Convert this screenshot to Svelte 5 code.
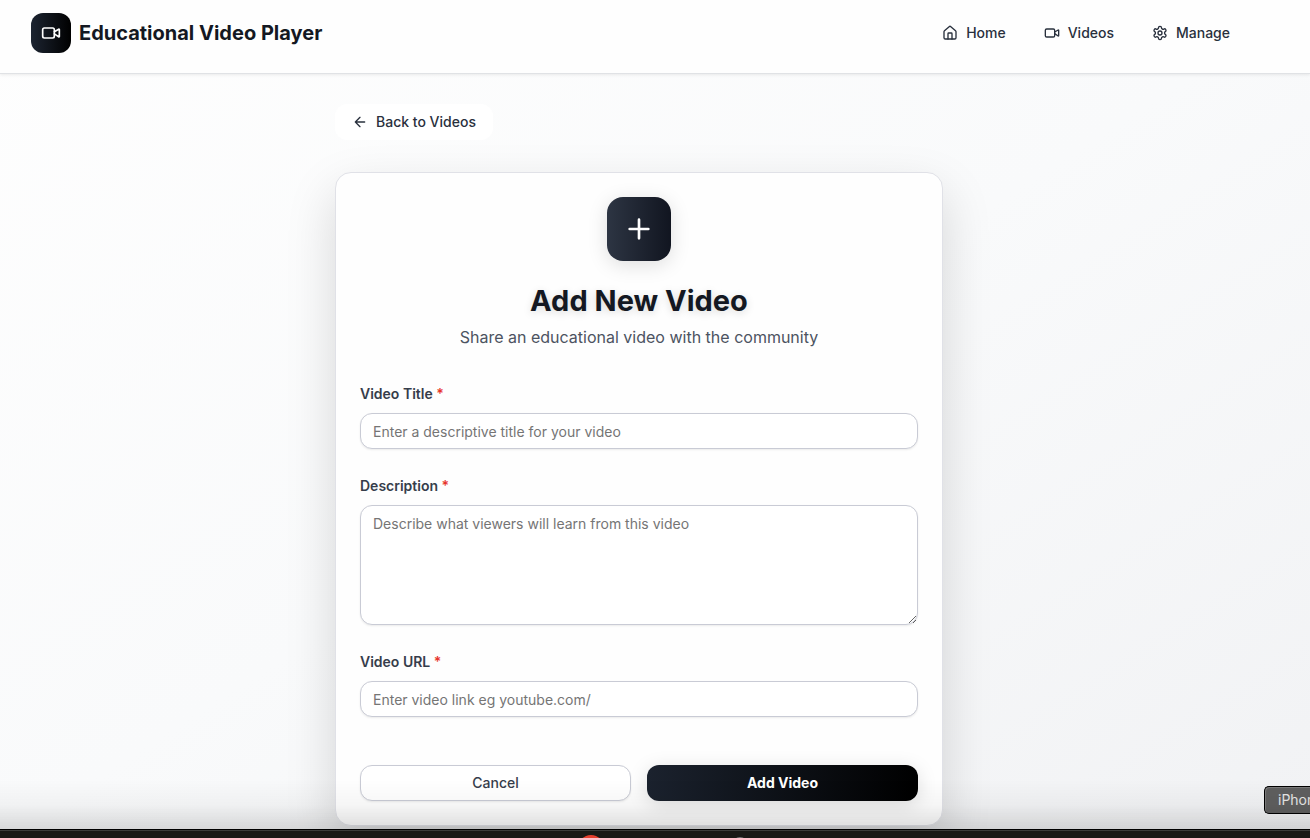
<script>
  let title = $state('');
  let description = $state('');
  let url = $state('');
</script>

{#snippet videoIcon(size)}
  <svg width={size} height={size} viewBox="0 0 24 24" aria-hidden="true">
    <path d="m16 13 5.223 3.482a.5.5 0 0 0 .777-.416V7.87a.5.5 0 0 0-.752-.432L16 10.5" />
    <rect x="2" y="6" width="14" height="12" rx="2" />
  </svg>
{/snippet}

<div class="page">
  <header>
    <div class="bar">
      <a class="brand" href="#home">
        <span class="logo">{@render videoIcon(20)}</span>
        <span>Educational Video Player</span>
      </a>
      <nav>
        <a href="#home">
          <svg width="16" height="16" viewBox="0 0 24 24" aria-hidden="true">
            <path d="M15 21v-8a1 1 0 0 0-1-1h-4a1 1 0 0 0-1 1v8" />
            <path d="M3 10a2 2 0 0 1 .709-1.528l7-5.999a2 2 0 0 1 2.582 0l7 5.999A2 2 0 0 1 21 10v9a2 2 0 0 1-2 2H5a2 2 0 0 1-2-2z" />
          </svg>
          Home
        </a>
        <a href="#videos">{@render videoIcon(16)} Videos</a>
        <a href="#manage">
          <svg width="16" height="16" viewBox="0 0 24 24" aria-hidden="true">
            <path d="M12.22 2h-.44a2 2 0 0 0-2 2v.18a2 2 0 0 1-1 1.73l-.43.25a2 2 0 0 1-2 0l-.15-.08a2 2 0 0 0-2.73.73l-.22.38a2 2 0 0 0 .73 2.73l.15.1a2 2 0 0 1 1 1.72v.51a2 2 0 0 1-1 1.74l-.15.09a2 2 0 0 0-.73 2.73l.22.38a2 2 0 0 0 2.73.73l.15-.08a2 2 0 0 1 2 0l.43.25a2 2 0 0 1 1 1.73V20a2 2 0 0 0 2 2h.44a2 2 0 0 0 2-2v-.18a2 2 0 0 1 1-1.73l.43-.25a2 2 0 0 1 2 0l.15.08a2 2 0 0 0 2.73-.73l.22-.39a2 2 0 0 0-.73-2.73l-.15-.08a2 2 0 0 1-1-1.74v-.5a2 2 0 0 1 1-1.74l.15-.09a2 2 0 0 0 .73-2.73l-.22-.38a2 2 0 0 0-2.73-.73l-.15.08a2 2 0 0 1-2 0l-.43-.25a2 2 0 0 1-1-1.73V4a2 2 0 0 0-2-2z" />
            <circle cx="12" cy="12" r="3" />
          </svg>
          Manage
        </a>
      </nav>
    </div>
  </header>

  <main>
    <a class="back" href="#videos">
      <svg width="16" height="16" viewBox="0 0 24 24" aria-hidden="true">
        <path d="m12 19-7-7 7-7M19 12H5" />
      </svg>
      Back to Videos
    </a>

    <section class="card">
      <div class="intro">
        <span class="badge">
          <svg width="32" height="32" viewBox="0 0 24 24" aria-hidden="true">
            <path d="M5 12h14M12 5v14" />
          </svg>
        </span>
        <h1>Add New Video</h1>
        <p>Share an educational video with the community</p>
      </div>

      <form onsubmit={(e) => e.preventDefault()}>
        <div class="field">
          <label for="title">Video Title <span>*</span></label>
          <input id="title" type="text" placeholder="Enter a descriptive title for your video" bind:value={title} />
        </div>
        <div class="field">
          <label for="description">Description <span>*</span></label>
          <textarea id="description" placeholder="Describe what viewers will learn from this video" bind:value={description}></textarea>
        </div>
        <div class="field">
          <label for="url">Video URL <span>*</span></label>
          <input id="url" type="text" placeholder="Enter video link eg youtube.com/" bind:value={url} />
        </div>
        <div class="actions">
          <button type="button" class="cancel">Cancel</button>
          <button type="submit" class="submit">Add Video</button>
        </div>
      </form>
    </section>
  </main>

  <div class="tooltip">iPhone</div>
  <div class="dock" aria-hidden="true">
    <i class="red"></i>
    <i class="gray"></i>
  </div>
</div>

<style>
  :global(body) {
    margin: 0;
  }
  .page,
  .page * {
    box-sizing: border-box;
  }
  .page {
    min-height: 100vh;
    font-family: Inter, sans-serif;
    font-size: 14px;
    line-height: 20px;
    color: #29303d;
    background: linear-gradient(to bottom right, #fefefe 0%, #f9fafb 50%, #f1f2f4 100%);
  }
  svg {
    flex: none;
    fill: none;
    stroke: currentColor;
    stroke-width: 2;
    stroke-linecap: round;
    stroke-linejoin: round;
  }
  a {
    color: inherit;
    text-decoration: none;
  }
  header {
    padding: 13px 32px 20px 0;
    background: #fefefe;
    border-bottom: 1px solid #e0e2e5;
    box-shadow: 0 1px 3px rgba(0, 0, 0, 0.08);
  }
  .bar {
    display: flex;
    align-items: center;
    justify-content: space-between;
    max-width: 1280px;
    margin: 0 auto;
    padding: 0 32px 0 31px;
  }
  .brand {
    display: flex;
    align-items: center;
    gap: 8px;
    font-size: 20px;
    line-height: 28px;
    font-weight: 700;
    color: #141822;
  }
  .logo {
    display: grid;
    place-items: center;
    width: 40px;
    height: 40px;
    border-radius: 12px;
    color: #fff;
    background: linear-gradient(90deg, #1c2431, #000);
  }
  nav {
    display: flex;
    gap: 6px;
  }
  nav a,
  .back {
    display: flex;
    align-items: center;
    gap: 8px;
    padding: 6px 16px;
    border-radius: 12px;
    font-weight: 500;
  }
  main {
    display: flex;
    flex-direction: column;
    align-items: center;
    padding: 30px 32px 12px 0;
  }
  .back,
  .card {
    width: 100%;
    max-width: 608px;
  }
  .back {
    width: fit-content;
    padding: 8px 17px;
    margin: 0 auto 32px max(0px, calc(50% - 304px));
    background: #fff;
  }
  .card {
    padding: 24px;
    border: 1px solid #e0e1e7;
    border-radius: 16px;
    background: #fefefe;
    box-shadow: 0 20px 50px rgba(0, 0, 0, 0.15);
  }
  .intro {
    display: flex;
    flex-direction: column;
    align-items: center;
    text-align: center;
  }
  .badge {
    display: grid;
    place-items: center;
    width: 64px;
    height: 64px;
    margin-bottom: 22px;
    border-radius: 16px;
    color: #fff;
    background: linear-gradient(90deg, #2d3543, #111520);
    box-shadow: 0 4px 20px rgba(0, 0, 0, 0.13);
  }
  h1 {
    margin: 0 0 6px;
    font-size: 29px;
    line-height: 36px;
    font-weight: 700;
    color: #141822;
    text-shadow: 0 2px 8px rgba(0, 0, 0, 0.15);
  }
  p {
    margin: 0;
    font-size: 16px;
    line-height: 24px;
    color: #4c5361;
  }
  form {
    display: flex;
    flex-direction: column;
    gap: 27px;
    padding-top: 35px;
  }
  .field {
    display: flex;
    flex-direction: column;
    gap: 9px;
  }
  label {
    font-weight: 600;
    color: #363d4b;
  }
  label span {
    color: #e7352c;
  }
  input,
  textarea,
  button {
    width: 100%;
    height: 36px;
    margin: 0;
    border: 1px solid #c9cbd5;
    border-radius: 12px;
    font: inherit;
    color: #29303d;
    background: #fff;
    box-shadow: 0 1px 2px rgba(0, 0, 0, 0.08);
  }
  input,
  textarea {
    padding: 8px 12px;
    outline: none;
  }
  textarea {
    display: block;
    height: 120px;
    resize: vertical;
  }
  ::placeholder {
    color: #757575;
    opacity: 1;
  }
  .actions {
    display: grid;
    grid-template-columns: 1fr 1fr;
    gap: 16px;
    padding-top: 21px;
  }
  button {
    font-weight: 500;
    color: #363d4b;
    cursor: pointer;
  }
  .submit {
    border: 0;
    font-weight: 700;
    color: #fff;
    background: linear-gradient(90deg, #1b222e, #000);
    box-shadow: 0 4px 20px rgba(0, 0, 0, 0.13);
  }
  .tooltip {
    position: fixed;
    right: 0;
    bottom: 24px;
    width: 46px;
    height: 28px;
    padding: 3px 0 0 13px;
    overflow: hidden;
    white-space: nowrap;
    color: #e6e6e6;
    background: #5f5f5f;
    border: 1px solid #000;
    border-right: 0;
    border-radius: 5px 0 0 5px;
    box-shadow: inset 1px 1px #7b7b7b;
  }
  .dock {
    position: fixed;
    inset: auto 0 0;
    height: 9px;
    background: #1a1a17;
    border-top: 1px solid #000;
    box-shadow: inset 0 1px #3c3d3b;
    pointer-events: none;
  }
  .dock::before {
    content: '';
    position: absolute;
    inset: -51px 0 auto;
    height: 50px;
    background: linear-gradient(rgba(0, 0, 0, 0), rgba(0, 0, 0, 0.03) 50%, rgba(0, 0, 0, 0.13));
  }
  .dock i {
    position: absolute;
    border-radius: 50%;
  }
  .red {
    left: 578px;
    top: 5px;
    width: 26px;
    height: 26px;
    background: #e8402f;
    clip-path: inset(0 0 22px);
  }
  .gray {
    left: 732px;
    top: 7px;
    width: 16px;
    height: 16px;
    background: #777;
    clip-path: inset(0 0 14px);
  }
</style>
